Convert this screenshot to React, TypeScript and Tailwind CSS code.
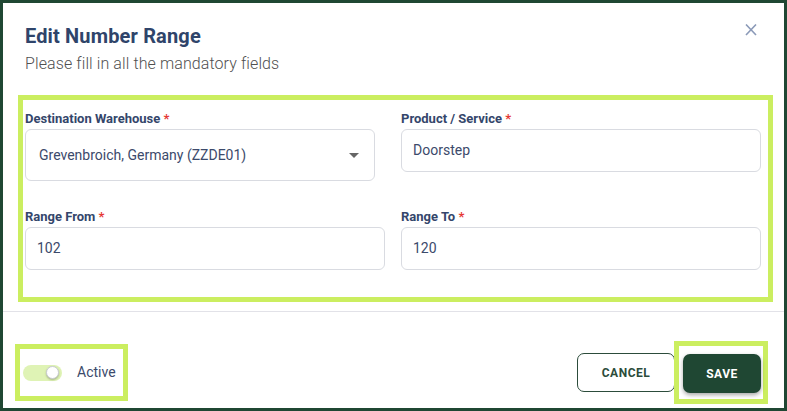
import { useState } from "react";

const Required = () => <span className="text-[#e53935]"> *</span>;

const FieldLabel = ({ text }: { text: string }) => (
  <label className="block h-4 text-[13px] leading-4 font-bold text-[#34466b] mb-[2px]">
    {text}
    <Required />
  </label>
);

const TextField = ({ label, value, width }: { label: string; value: string; width: string }) => (
  <div>
    <FieldLabel text={label} />
    <div
      className={`${width} h-[43px] flex items-center px-[11px] border border-[#d9dbe1] rounded-[6px] text-[14px] text-[#3c4a6b]`}
    >
      {value}
    </div>
  </div>
);

const EditNumberRange = () => {
  const [active, setActive] = useState(true);

  return (
    <div
      className="w-[787px] h-[411px] border-[3px] border-[#1f4733] bg-white flex flex-col"
      style={{ fontFamily: "Roboto, 'Liberation Sans', sans-serif" }}
    >
      {/* Header */}
      <div className="flex justify-between pl-[22px] pr-[27px] pt-[19px]">
        <div>
          <h2 className="text-[20px] leading-7 font-bold tracking-[0.15px] text-[#2f446a]">Edit Number Range</h2>
          <p className="mt-[2px] text-[16px] leading-6 font-light tracking-[0.1px] text-[#505050]">
            Please fill in all the mandatory fields
          </p>
        </div>
        <button className="mt-[2px] w-3 h-3 text-[#8b9ab8]">
          <svg viewBox="0 0 12 12" width="12" height="12" stroke="currentColor" strokeWidth="1.6" fill="none">
            <path d="M1 0.5 L11 11 M11 0.5 L1 11" />
          </svg>
        </button>
      </div>

      {/* Form fields */}
      <div className="mt-[19px] ml-[15px] w-[755px] h-[207px] border-[5px] border-[#cbee60]">
        <div className="grid grid-cols-[360px_360px] gap-x-4 gap-y-[28px] pl-[2px] pt-[11px]">
          <div>
            <FieldLabel text="Destination Warehouse" />
            <div className="w-[350px] h-[52px] flex items-center justify-between pl-[13px] pr-[15px] border border-[#d9dbe1] rounded-[6px] text-[14px] text-[#3c4a6b]">
              <span>Grevenbroich, Germany (ZZDE01)</span>
              <svg width="10" height="5" viewBox="0 0 10 5">
                <path d="M0 0 L10 0 L5 5 Z" fill="#666" />
              </svg>
            </div>
          </div>
          <TextField label="Product / Service" value="Doorstep" width="w-[360px]" />
          <TextField label="Range From" value="102" width="w-[360px]" />
          <TextField label="Range To" value="120" width="w-[360px]" />
        </div>
      </div>

      <div className="mt-[9px] border-t border-[#e2e2e8]" />

      {/* Footer */}
      <div className="flex items-center justify-between pl-[12px] pr-[16px] pt-[29px]">
        <div className="w-[113px] h-[57px] border-[5px] border-[#cbee60] flex items-center pl-[3px]">
          <button
            onClick={() => setActive(!active)}
            className="relative w-[39px] h-[16px] rounded-full bg-[#dff3b5]"
          >
            <span
              className={`absolute top-[1.5px] w-[13px] h-[13px] rounded-full bg-white border border-[#c9ccd2] shadow-[0_1px_2px_rgba(0,0,0,0.25)] ${
                active ? "left-[23px]" : "left-[2px]"
              }`}
            />
          </button>
          <span className="ml-[15px] text-[14px] text-[#3c4a6b]">Active</span>
        </div>

        <div className="flex items-center">
          <button className="w-[98px] h-[39px] border border-[#2c4c3b] rounded-[7px] text-[12px] font-bold tracking-[0.5px] text-[#2c4c3b]">
            CANCEL
          </button>
          <div className="ml-[-1px] border-[5px] border-[#cbee60] pl-[4px] pr-[2px] pt-[8px] pb-[6px]">
            <button className="w-[78px] h-[39px] bg-[#1f4733] rounded-[7px] text-[12px] font-bold tracking-[0.5px] text-white shadow-[0_2px_4px_rgba(0,0,0,0.35)]">
              SAVE
            </button>
          </div>
        </div>
      </div>
    </div>
  );
};

export default function App() {
  return <EditNumberRange />;
}
